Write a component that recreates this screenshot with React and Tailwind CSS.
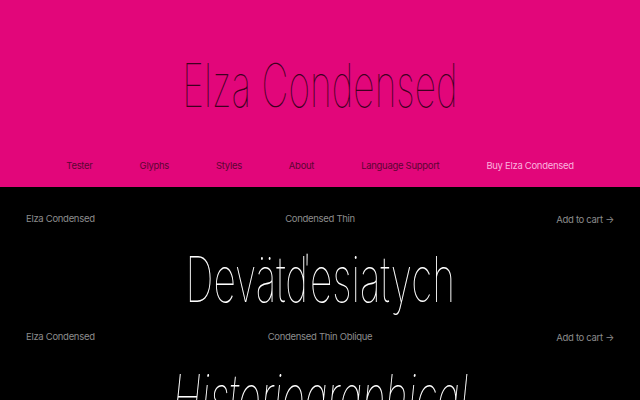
export default function App() {
  const nav = ["Tester", "Glyphs", "Styles", "About", "Language Support"];
  const rows = [
    { style: "Condensed Thin", sample: "Devätďesiatych", italic: false },
    { style: "Condensed Thin Oblique", sample: "Historiographical", italic: true },
  ];

  return (
    <div className="w-[640px] h-[400px] overflow-hidden bg-black font-['Inter','Liberation_Sans',sans-serif]">
      <header className="h-[187px] bg-[#e2067a] flex flex-col items-center">
        <h1 className="mt-[55px] h-[60px] text-[60px] leading-[60px] font-thin text-[#3d0020] whitespace-nowrap">
          <span className="inline-block scale-x-[0.62]">Elza Condensed</span>
        </h1>
        <nav className="mt-[45px] flex justify-center gap-[47px] text-[9.5px] leading-[12px] tracking-[-0.3px]">
          {nav.map((n) => (
            <a key={n} className="text-[#5c0533]">
              {n}
            </a>
          ))}
          <a className="text-[#fbb3df]">Buy Elza Condensed</a>
        </nav>
      </header>

      <main className="pt-[4px]">
        {rows.map((r) => (
          <section key={r.style} className="px-[26px] pt-[21px]">
            <div className="grid grid-cols-3 items-center text-[9.5px] leading-[12px] text-[#8c8c8c] tracking-[-0.3px]">
              <span>Elza Condensed</span>
              <span className="text-center">{r.style}</span>
              <span className="text-right mt-[2px]">Add to cart →</span>
            </div>
            <div className="mt-[23px] h-[60px] flex justify-center whitespace-nowrap">
              <span
                className={
                  "inline-block scale-x-[0.62] text-[63px] leading-[60px] font-thin text-white" +
                  (r.italic ? " italic" : "")
                }
              >
                {r.sample}
              </span>
            </div>
          </section>
        ))}
      </main>
    </div>
  );
}
